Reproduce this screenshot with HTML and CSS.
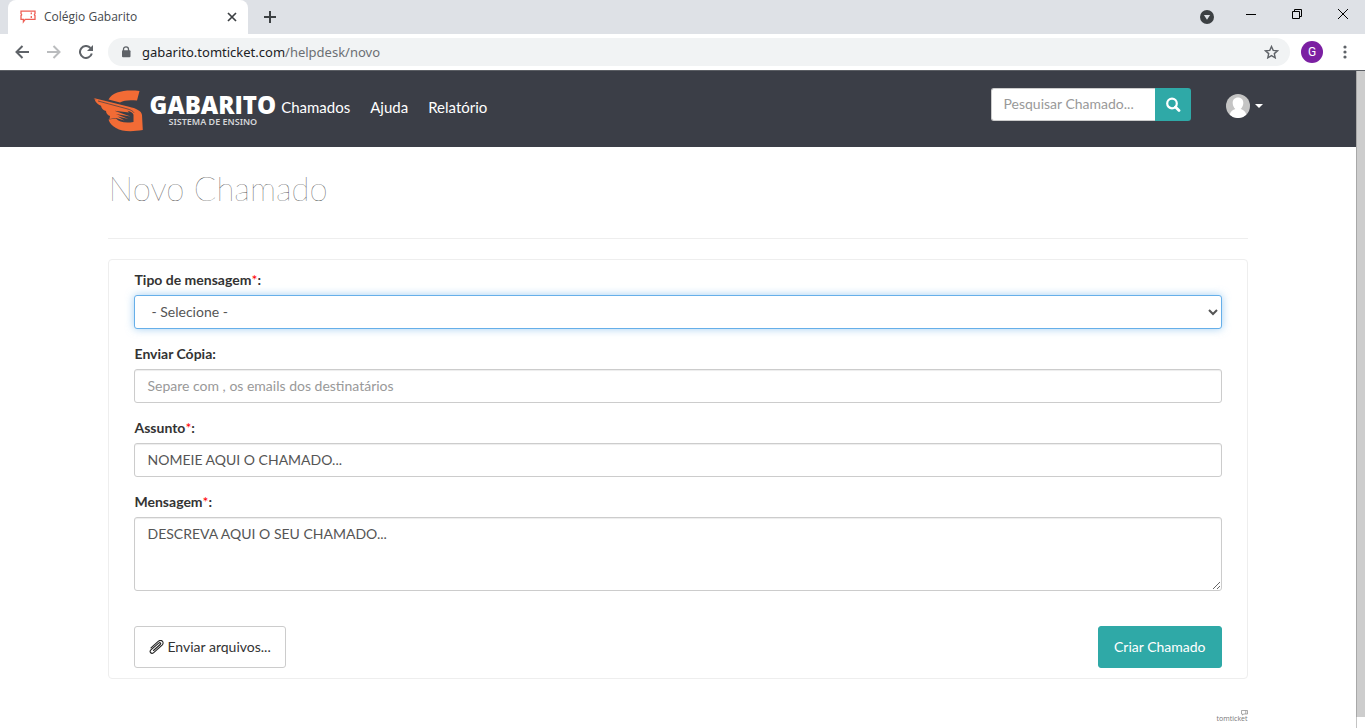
FILE: index.html
```html
<!DOCTYPE html>
<html lang="pt-BR">
<head>
<meta charset="utf-8">
<meta name="viewport" content="width=device-width, initial-scale=1">
<title>Colégio Gabarito</title>
<link rel="stylesheet" href="styles.css">
</head>
<body>
<div class="tabstrip">
  <div class="tab">
    <svg class="favicon" width="16" height="14" viewBox="0 0 16 14" fill="none" stroke="#ee5f55" stroke-width="1.3"><path d="M1 1.2h14v2.6q-1.3.9 0 1.8v3.8H5.2L3.4 11.800V9.400H1V5.600q1.300-.9 0-1.800z"/><path d="M11.300 2.500v1.800M11.300 5.900v2"/></svg>
    <span class="tab-title">Colégio Gabarito</span>
    <button class="plain" type="button" aria-label="Fechar guia"><svg width="10" height="10" viewBox="0 0 10 10" stroke="#3c4043" stroke-width="1.7"><path d="M1 1l8 8M9 1l-8 8"/></svg></button>
  </div>
  <button class="plain new-tab" type="button" aria-label="Nova guia"><svg width="12" height="12" viewBox="0 0 12 12" stroke="#3c4043" stroke-width="2"><path d="M6 0v12M0 6h12"/></svg></button>
  <div class="window-controls">
    <button class="plain" type="button" aria-label="Pesquisar guias"><svg width="14" height="14" viewBox="0 0 14 14"><circle cx="7" cy="7" r="7" fill="#3c4043"/><path d="M3.900 5h6.200L7 9.800z" fill="#dee1e6"/></svg></button>
    <button class="plain" type="button" aria-label="Minimizar"><svg width="10" height="10" viewBox="0 0 10 10" stroke="#000"><path d="M0 5.500h10"/></svg></button>
    <button class="plain" type="button" aria-label="Restaurar"><svg width="10" height="10" viewBox="0 0 10 10" fill="none" stroke="#000"><path d="M.5 2.500h7v7h-7zM2.500 2.500v-2h7v7h-2"/></svg></button>
    <button class="plain" type="button" aria-label="Fechar"><svg width="10" height="10" viewBox="0 0 10 10" stroke="#000"><path d="M0 0l10 10M10 0L0 10"/></svg></button>
  </div>
</div>
<div class="toolbar">
  <button class="plain" type="button" aria-label="Voltar"><svg width="14" height="14" viewBox="0 0 14 14" fill="none" stroke="#5f6368" stroke-width="2"><path d="M14 7H1.500M7.500 1l-6 6 6 6"/></svg></button>
  <button class="plain" type="button" aria-label="Avançar"><svg width="14" height="14" viewBox="0 0 14 14" fill="none" stroke="#babcbe" stroke-width="2"><path d="M0 7h12.500M6.500 1l6 6-6 6"/></svg></button>
  <button class="plain" type="button" aria-label="Recarregar"><svg width="14" height="14" viewBox="0 0 14 14" fill="none" stroke="#5f6368" stroke-width="2"><path d="M12.800 8.500A6 6 0 1 1 11.500 3"/><path d="M14 0v6H8z" fill="#5f6368" stroke="none"/></svg></button>
  <div class="address">
    <svg width="10" height="12" viewBox="0 0 10 12"><path d="M2.500 5V3.300a2.500 2.500 0 0 1 5 0V5" fill="none" stroke="#5f6368" stroke-width="1.300"/><rect x="1" y="4.300" width="8.500" height="7" rx="1" fill="#5f6368"/></svg>
    <span class="url"><span class="host">gabarito.tomticket.com</span>/helpdesk/novo</span>
    <button class="plain star" type="button" aria-label="Favoritos"><svg width="15" height="14" viewBox="0 0 15 14" fill="none" stroke="#5f6368" stroke-width="1.400"><path d="M7.500 1.500l1.700 3.900 4.300.4-3.200 2.800.9 4.200-3.700-2.200-3.700 2.200.9-4.200L1.500 5.800l4.300-.4z"/></svg></button>
  </div>
  <button class="profile" type="button">G</button>
  <button class="plain menu" type="button" aria-label="Menu"><svg width="4" height="14" viewBox="0 0 4 14" fill="#5f6368"><circle cx="2" cy="2" r="1.600"/><circle cx="2" cy="7" r="1.600"/><circle cx="2" cy="12" r="1.600"/></svg></button>
</div>
<div class="viewport">
  <div class="page">
    <header class="site-header">
      <div class="container header-row">
        <a class="brand" href="#" aria-label="Gabarito Sistema de Ensino">
          <svg class="brand-mark" width="52" height="42" viewBox="0 0 52 42" fill="#f26b35">
            <path d="M46.500 1C32-.5 20 1.500 15.500 9.500L27 12.500c4-2.300 9-2.700 17-2z"/>
            <path d="M.5 8L36 16.800c7 1.600 12.500 4 13 8.200l.8 15C38 42 29 41.500 23 38c-4-2.300-6.500-5-7.500-8.500L23 28.500c3 3.500 9 5 17.500 3.500v-7c0-2.300-3-3.600-7-4.600L8 12.800z"/>
            <path d="M1.500 9c1 3.500 3.500 5.800 6.500 6.700.3 2.500 2 4.300 5 5.300.2 2.500 1.500 4 4 5l-.5 3 6.500-1 8.500 2.500-7-4 11 2.500-12.500-5 14.500 2.500-16-5.700L36 22.500l-3-4z"/>
            <path d="M5 11l29 7.800c3 .8 6 2 7 4" fill="none" stroke="#3b3e47" stroke-width=".7"/>
          </svg>
          <span class="brand-text"><span class="brand-name">GABARITO</span><span class="brand-tag">SISTEMA DE ENSINO</span></span>
        </a>
        <nav class="nav"><a href="#">Chamados</a><a href="#">Ajuda</a><a href="#">Relatório</a></nav>
        <form class="search">
          <input type="text" placeholder="Pesquisar Chamado..." aria-label="Pesquisar Chamado">
          <button type="button" aria-label="Pesquisar"><svg width="16" height="16" viewBox="0 0 16 16" fill="none" stroke="#fff"><circle cx="7" cy="7.500" r="4.800" stroke-width="2.200"/><path d="M10.500 11l3.500 3.500" stroke-width="2.800" stroke-linecap="round"/></svg></button>
        </form>
        <button class="plain user" type="button" aria-label="Conta">
          <svg width="24" height="24" viewBox="0 0 24 24"><circle cx="12" cy="12" r="12" fill="#c4c4c4"/><path fill="#fff" d="M12 3.500c-3.500 0-5.500 2.500-5.300 5.800.1 2.400 1.200 4.500 2.700 5.700-2.500.8-4.700 2-5.700 5.700a12 12 0 0 0 16.600 0c-1-3.700-3.200-4.900-5.700-5.700 1.500-1.200 2.600-3.300 2.700-5.700.2-3.300-1.800-5.800-5.300-5.800z"/></svg>
          <svg width="8" height="4" viewBox="0 0 8 4"><path d="M0 0h8L4 4z" fill="#fff"/></svg>
        </button>
      </div>
    </header>
    <main class="container">
      <h1>Novo Chamado</h1>
      <form class="panel">
        <div class="group">
          <label for="tipo">Tipo de mensagem<span class="req">*</span>:</label>
          <select id="tipo" class="control focused"><option>- Selecione -</option></select>
        </div>
        <div class="group">
          <label for="copia">Enviar Cópia:</label>
          <input id="copia" class="control" type="text" placeholder="Separe com , os emails dos destinatários">
        </div>
        <div class="group">
          <label for="assunto">Assunto<span class="req">*</span>:</label>
          <input id="assunto" class="control" type="text" value="NOMEIE AQUI O CHAMADO...">
        </div>
        <div class="group">
          <label for="mensagem">Mensagem<span class="req">*</span>:</label>
          <textarea id="mensagem" class="control" rows="3">DESCREVA AQUI O SEU CHAMADO...</textarea>
        </div>
        <div class="actions">
          <button class="btn" type="button"><svg width="15" height="14" viewBox="0 0 15 14" fill="none" stroke="#222" stroke-width="1.100" stroke-linecap="round"><path d="M4.500 10.500l6.700-6c1.200-1.300-.2-2.600-1.500-1.400L1.900 9.900c-2 2 .5 4.700 2.800 2.700l8.400-7.500c2.800-3-.9-6.300-3.900-3.700L2 7.800"/></svg>Enviar arquivos...</button>
          <button class="btn btn-primary" type="button">Criar Chamado</button>
        </div>
      </form>
      <footer class="credit"><svg width="7" height="6" viewBox="0 0 7 6" fill="none" stroke="#888" stroke-width=".7"><path d="M.5.5h6v3.500H2.500L1.500 5.200V4h-1zM4.800.5V4"/></svg><span>tomticket</span></footer>
    </main>
  </div>
  <div class="scrollbar"><div class="thumb"></div></div>
</div>
</body>
</html>
```
FILE: styles.css
```css
* { box-sizing: border-box; }
body {
  margin: 0;
  height: 100vh;
  display: flex;
  flex-direction: column;
  overflow: hidden;
  background: #fff;
  color: #333;
  font: 14px/20px Lato, "Open Sans", sans-serif;
}
button, input, select, textarea { font: inherit; margin: 0; }
svg { display: block; flex: none; }
.plain { border: 0; padding: 0; background: none; }

/* Browser frame */
.tabstrip {
  flex: none;
  height: 34px;
  display: flex;
  align-items: center;
  padding-left: 8px;
  background: #dee1e6;
}
.tab {
  width: 240px;
  height: 34px;
  display: flex;
  align-items: center;
  padding: 0 11px 0 12px;
  background: #fff;
  border-radius: 8px 8px 0 0;
}
.tab-title {
  flex: 1;
  margin-left: 8px;
  font-family: "Open Sans", sans-serif;
  font-size: 12px;
  color: #45494d;
}
.new-tab { margin-left: 16px; }
.window-controls {
  margin-left: auto;
  padding: 0 17px 6px 0;
  display: flex;
  align-items: center;
  gap: 36px;
}
.window-controls button:first-child { margin: 5px -4px 0 0; }
.toolbar {
  flex: none;
  height: 37px;
  display: flex;
  align-items: center;
  padding: 0 18px 0 15px;
  border-bottom: 1px solid #5b5e64;
  background: #fff;
}
.toolbar > .plain { margin-right: 18px; }
.toolbar > .plain:nth-child(3) { margin-right: 15px; }
.toolbar > .menu { margin: 0 0 0 20px; }
.address {
  flex: 1;
  height: 28px;
  display: flex;
  align-items: center;
  padding: 0 11px 0 13px;
  border-radius: 14px;
  background: #f1f3f4;
}
.url {
  flex: 1;
  margin-left: 11px;
  font: 13px/20px "Noto Sans", sans-serif;
  color: #6b6f73;
}
.host { color: #202124; }
.profile {
  width: 22px;
  height: 22px;
  margin-left: 11px;
  padding: 0;
  border: 0;
  border-radius: 50%;
  background: #7b1fa2;
  color: #fff;
  font: 12px/22px Roboto, sans-serif;
}
.viewport { flex: 1; min-height: 0; display: flex; }
.page { flex: 1; overflow: hidden; }
.scrollbar {
  width: 9px;
  padding-bottom: 11px;
  border-left: 1px solid #c4c4c4;
}
.thumb { height: 100%; background: #cdcdcd; border-left: 1px solid #a8a8a8; margin-left: -1px; }

/* Site */
.container { width: 84%; max-width: 1140px; margin: 0 auto; }
.site-header { background: #3b3e47; }
.header-row { height: 76px; display: flex; align-items: center; }
.brand {
  margin: 3px 0 0 -15px;
  display: flex;
  align-items: center;
  gap: 4px;
  color: #fff;
  text-decoration: none;
}
.brand-text { display: flex; flex-direction: column; align-items: center; padding-bottom: 2px; }
.brand-name { font: 800 24px/24px "Open Sans", sans-serif; }
.brand-tag { font: 600 9px/10px "Noto Sans", sans-serif; color: #d5d6d9; }
.nav { display: flex; gap: 20px; margin: 0 0 4px 5px; }
.nav a { color: #fff; font-size: 15px; text-decoration: none; }
.search { display: flex; margin: 0 35px 10px auto; }
.search input {
  width: 164px;
  height: 33px;
  padding: 5px 12px 7px;
  border: 1px solid #ccc;
  border-right: 0;
  border-radius: 3px 0 0 3px;
}
.search button {
  width: 36px;
  display: flex;
  align-items: center;
  justify-content: center;
  padding: 0;
  border: 0;
  border-radius: 0 3px 3px 0;
  background: #2fa9a7;
}
::placeholder { color: #999; opacity: 1; }
.user { display: flex; align-items: center; gap: 5px; margin: 0 -15px 6px 0; }
h1 {
  margin: 0;
  padding: 21px 0 29px;
  border-bottom: 1px solid #eee;
  font-size: 33px;
  line-height: 41px;
  font-weight: 100;
}
.panel {
  margin-top: 20px;
  padding: 10px 25px;
  border: 1px solid #eee;
  border-radius: 4px;
}
.group { display: flex; flex-direction: column; margin-bottom: 15px; }
label { margin-bottom: 5px; font-weight: 700; }
.req { color: #f00; font-weight: 400; }
.control {
  width: 100%;
  height: 34px;
  padding: 5px 12px 7px;
  border: 1px solid #ccc;
  border-radius: 3px;
  background: #fff;
  color: #555;
  box-shadow: inset 0 1px 1px rgba(0, 0, 0, .075);
}
textarea.control { height: 74px; padding-top: 6px; resize: vertical; }
.focused {
  border-color: #66afe9;
  box-shadow: 0 0 8px rgba(102, 175, 233, .6);
}
.actions { display: flex; justify-content: space-between; margin-top: 35px; }
.btn {
  height: 42px;
  display: flex;
  align-items: center;
  gap: 3px;
  padding: 0 14px;
  border: 1px solid #ccc;
  border-radius: 3px;
  background: #fff;
  color: #333;
}
.btn-primary { padding: 0 15px; border-color: #2fa9a7; background: #2fa9a7; color: #fff; }
.credit {
  margin-top: 31px;
  display: flex;
  flex-direction: column;
  align-items: flex-end;
  color: #777;
  font: 7px/5px "Open Sans", sans-serif;
}
```
